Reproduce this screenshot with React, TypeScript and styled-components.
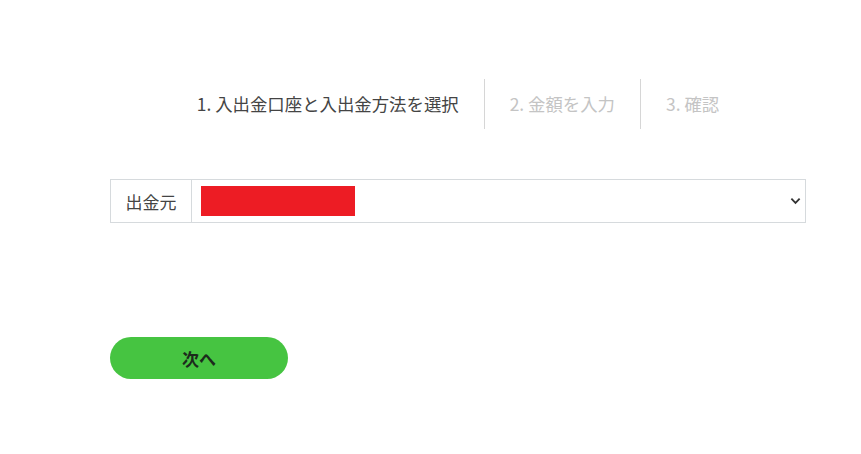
import React from 'react';
import styled, { createGlobalStyle } from 'styled-components';

const GlobalStyle = createGlobalStyle`
  body {
    margin: 0;
    background: #fff;
    font-family: Roboto, "Noto Sans CJK JP", sans-serif;
    color: #333;
  }
`;

const steps = ['1. 入出金口座と入出金方法を選択', '2. 金額を入力', '3. 確認'];

export default function App() {
  return (
    <>
      <GlobalStyle />
      <Page>
        <StepList>
          {steps.map((label, i) => (
            <Step key={label} active={i === 0} first={i === 0}>
              {label}
            </Step>
          ))}
        </StepList>

        <FieldRow>
          <FieldLabel>出金元</FieldLabel>
          <SelectBox>
            <Masked />
            <Chevron viewBox="0 0 12 8">
              <path d="M1.5 1.5 L6 6 L10.5 1.5" fill="none" stroke="#333" strokeWidth="2" />
            </Chevron>
          </SelectBox>
        </FieldRow>

        <NextButton>次へ</NextButton>
      </Page>
    </>
  );
}

const Page = styled.div`
  width: 696px;
  margin-left: 110px;
  padding-top: 79px;
`;

const StepList = styled.div`
  display: flex;
  justify-content: center;
  height: 50px;
`;

const Step = styled.div<{ active: boolean; first: boolean }>`
  display: flex;
  align-items: center;
  padding: 0 25px 2px;
  font-family: "Noto Sans CJK JP", sans-serif;
  font-size: 17.4px;
  color: ${(p) => (p.active ? '#444' : '#c4c4c4')};
  border-left: ${(p) => (p.first ? 'none' : '1px solid #d6d6d6')};
`;

const FieldRow = styled.div`
  display: flex;
  margin-top: 50px;
  height: 44px;
  border: 1px solid #d6dadd;
  box-sizing: border-box;
`;

const FieldLabel = styled.div`
  width: 80px;
  display: flex;
  align-items: center;
  justify-content: center;
  border-right: 1px solid #d6dadd;
  font-family: "Noto Sans CJK JP", sans-serif;
  font-size: 17px;
  color: #444;
`;

const SelectBox = styled.div`
  flex: 1;
  display: flex;
  align-items: center;
  justify-content: space-between;
  padding: 0 4px 0 9px;
`;

const Masked = styled.div`
  width: 154px;
  height: 30px;
  background: #ed1c24;
`;

const Chevron = styled.svg`
  width: 11px;
  height: 8px;
`;

const NextButton = styled.button`
  display: block;
  margin-top: 114px;
  width: 178px;
  height: 42px;
  border: none;
  border-radius: 21px;
  background: #46c441;
  font-family: "Noto Sans CJK JP", sans-serif;
  font-weight: 700;
  font-size: 17px;
  color: #1c2b1c;
  cursor: pointer;
`;
